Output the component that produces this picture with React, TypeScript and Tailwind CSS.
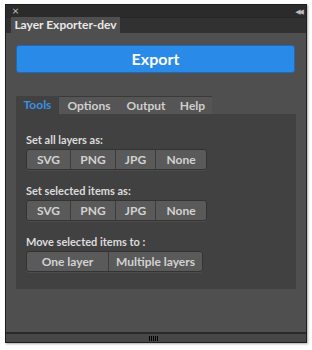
import React from 'react';

const font = { fontFamily: '"Lato", "Open Sans", "DejaVu Sans", sans-serif' };

type Item = { label: string; w: string };

function BtnGroup({ items }: { items: Item[] }) {
    return (
        <div className="flex w-fit rounded-[3px] border border-[#333] bg-[#5a5a5a] shadow-[0_1px_0_rgba(255,255,255,0.06)]">
            {items.map((item, i) => (
                <div
                    key={item.label}
                    className={`${item.w} h-[19px] flex items-center justify-center text-[12px] font-bold text-[#d2d2d2] ${i > 0 ? 'border-l border-[#3c3c3c]' : ''}`}
                >
                    {item.label}
                </div>
            ))}
        </div>
    );
}

function Section({ label, items }: { label: string; items: Item[] }) {
    return (
        <div className="flex flex-col gap-[3px]">
            <p className="text-[11px] font-bold text-[#dcdcdc] leading-[13px]">{label}</p>
            <BtnGroup items={items} />
        </div>
    );
}

const formats: Item[] = [
    { label: 'SVG', w: 'w-[43px]' },
    { label: 'PNG', w: 'w-[45px]' },
    { label: 'JPG', w: 'w-[40px]' },
    { label: 'None', w: 'w-[51px]' },
];

const moves: Item[] = [
    { label: 'One layer', w: 'w-[81px]' },
    { label: 'Multiple layers', w: 'w-[94px]' },
];

export default function App() {
    return (
        <div className="w-[312px] h-[350px] bg-white pt-[4px] pl-[5px]" style={font}>
            <div className="w-[302px] h-[339px] flex flex-col border border-[#1e1e1e] shadow-[1px_1px_2px_rgba(0,0,0,0.35)]">
                {/* Title bar */}
                <div className="h-[12px] bg-[#2b2b2b] flex items-center justify-between pl-[6px] pr-[4px] text-[#bbb]">
                    <span className="text-[12px] leading-none">×</span>
                    <span className="text-[7px] leading-none tracking-[-2px]">◀◀</span>
                </div>

                {/* Tab bar */}
                <div className="h-[16px] bg-[#313131] border-t border-[#262626] flex items-end pl-[5px]">
                    <div className="w-[109px] h-[16px] bg-[#4f4f4f] flex items-center justify-center text-[12px] font-bold text-[#e8e8e8]">
                        Layer Exporter-dev
                    </div>
                </div>

                {/* Body */}
                <div className="flex-1 bg-[#4f4f4f] px-[10px] pt-[12px]">
                    <button className="w-[279px] h-[28px] rounded-[3px] bg-[#2a8ae8] border border-[#1d6ab8] text-white text-[16px] font-bold flex items-center justify-center">
                        Export
                    </button>

                    <div className="mt-[23px] flex h-[18px] text-[12px] font-bold">
                        <div className="w-[43px] bg-[#414141] flex items-center justify-center text-[#3d8fe2]">Tools</div>
                        <div className="flex bg-[#555] border-t border-[#3a3a3a] text-[#cfcfcf]">
                            <div className="w-[60px] flex items-center justify-center">Options</div>
                            <div className="w-[54px] flex items-center justify-center">Output</div>
                            <div className="w-[39px] flex items-center justify-center">Help</div>
                        </div>
                    </div>

                    <div className="w-[280px] h-[175px] bg-[#414141] px-[10px] pt-[19px] flex flex-col gap-[14px]">
                        <Section label="Set all layers as:" items={formats} />
                        <Section label="Set selected items as:" items={formats} />
                        <Section label="Move selected items to :" items={moves} />
                    </div>
                </div>

                {/* Status bar */}
                <div className="h-[10px] bg-[#474747] border-t-2 border-[#2a2a2a] flex justify-center items-center">
                    <div className="flex gap-[1px] ml-[-6px]">
                        {[0, 1, 2, 3, 4].map(i => (
                            <div key={i} className="w-[1px] h-[5px] bg-black" />
                        ))}
                    </div>
                </div>
            </div>
        </div>
    );
}
